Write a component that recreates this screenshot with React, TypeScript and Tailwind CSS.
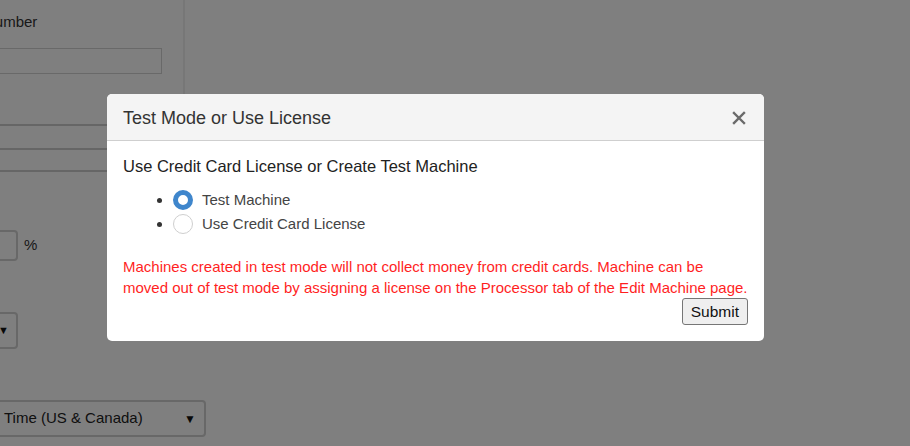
import React from 'react';

const Radio: React.FC<{ checked?: boolean; label: string }> = ({ checked, label }) => (
  <li className="h-[24px]">
    <label className="inline-flex items-center h-[24px] align-top">
      {checked ? (
        <span className="w-[20px] h-[20px] rounded-full border-[5px] border-[#3f86cc] bg-white" />
      ) : (
        <span className="w-[20px] h-[20px] rounded-full border border-[#cfcfcf] bg-white" />
      )}
      <span className="ml-[9px] text-[15px] text-[#444]">{label}</span>
    </label>
  </li>
);

export default function App() {
  return (
    <div className="relative w-[910px] h-[446px] overflow-hidden bg-white font-['Liberation_Sans',Arial,sans-serif] text-[#333]">
      {/* page behind the dialog */}
      <div className="flex flex-col -ml-[20px]">
        <div className="w-[205px] h-[300px] border-r-2 border-[#efefef] pt-[12px]">
          <div className="text-[15px] leading-[20px] pl-[4px]">Number</div>
          <div className="mt-[16px] w-[182px] h-[26px] border border-[#d2d2d2]" />
          <div className="mt-[50px] w-[203px] h-[26px] border-t-2 border-b-2 border-[#cccccc]" />
          <div className="w-[203px] h-[22px] border-b-2 border-[#cccccc]" />
          <div className="mt-[58px] flex items-center">
            <div className="w-[38px] h-[31px] rounded-[4px] border-2 border-[#d0d0d0]" />
            <span className="ml-[6px] text-[15px]">%</span>
          </div>
        </div>
        <div className="mt-[12px] w-[38px] h-[37px] rounded-[4px] border-2 border-[#d0d0d0] flex items-center pl-[16px] text-[11px] text-[#111]">
          ▼
        </div>
        <div className="mt-[51px] w-[226px] h-[37px] rounded-[4px] border-2 border-[#d0d0d0] flex items-center justify-between pl-[22px] pr-[8px] text-[15px] text-[#222]">
          <span>Time (US &amp; Canada)</span>
          <span className="text-[12px] text-[#111]">▼</span>
        </div>
      </div>

      {/* overlay */}
      <div className="absolute inset-0 bg-black/50" />

      {/* dialog */}
      <div className="absolute left-[107px] top-[94px] w-[657px] rounded-[5px] bg-white overflow-hidden">
        <div className="h-[47px] bg-[#f4f4f4] border-b border-[#cfcfcf] flex items-center justify-between px-[16px] pt-[2px]">
          <span className="text-[18px] text-[#333]">Test Mode or Use License</span>
          <svg width="14" height="14" viewBox="0 0 14 14" className="mr-[2px]">
            <path d="M2 2 L12 12 M12 2 L2 12" stroke="#6a6a6a" strokeWidth="2.4" strokeLinecap="square" />
          </svg>
        </div>
        <div className="px-[16px] pt-[15px] pb-[16px]">
          <div className="text-[16.5px] leading-[20px] text-[#222]">Use Credit Card License or Create Test Machine</div>
          <ul className="mt-[12px] pl-[50px] list-disc marker:text-[#333]">
            <Radio checked label="Test Machine" />
            <Radio label="Use Credit Card License" />
          </ul>
          <p className="mt-[20px] text-[15px] leading-[21px] text-[#ff1f1f]">
            Machines created in test mode will not collect money from credit cards. Machine can be moved out of test mode by assigning a license on the Processor tab of the Edit Machine page.
          </p>
          <div className="flex justify-end">
            <button className="h-[27px] px-[8px] text-[15.5px] text-[#111] bg-[#efefef] border border-[#767676] rounded-[3px]">
              Submit
            </button>
          </div>
        </div>
      </div>
    </div>
  );
}
